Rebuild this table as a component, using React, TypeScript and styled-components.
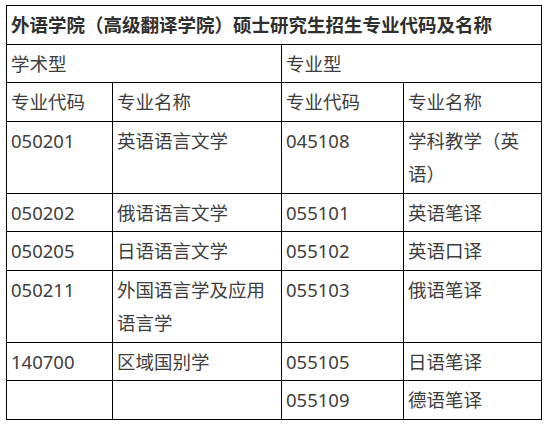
import React from "react";
import styled, { createGlobalStyle } from "styled-components";

const GlobalStyle = createGlobalStyle`
  html, body {
    margin: 0;
    padding: 0;
    background: #ffffff;
  }
  body {
    font-family: "Noto Sans", "Noto Sans CJK SC", sans-serif;
  }
`;

const Page = styled.div`
  padding: 5px 6px;
`;

const Table = styled.table`
  width: 535px;
  table-layout: fixed;
  border-collapse: collapse;
  font-size: 18.5px;
  line-height: 33.5px;
  color: #3e3e3e;
`;

const Cell = styled.td<{ $bold?: boolean }>`
  border: 1px solid #000000;
  padding: 2px 4px;
  vertical-align: top;
  text-align: left;
  font-weight: ${({ $bold }) => ($bold ? 700 : 400)};
  color: ${({ $bold }) => ($bold ? "#2f2f2f" : "#3e3e3e")};
  word-break: break-all;
`;

type Row = [string, string, string, string];

const rows: Row[] = [
  ["050201", "英语语言文学", "045108", "学科教学（英语）"],
  ["050202", "俄语语言文学", "055101", "英语笔译"],
  ["050205", "日语语言文学", "055102", "英语口译"],
  ["050211", "外国语言学及应用语言学", "055103", "俄语笔译"],
  ["140700", "区域国别学", "055105", "日语笔译"],
  ["", "", "055109", "德语笔译"],
];

export default function App() {
  return (
    <>
      <GlobalStyle />
      <Page>
        <Table>
          <colgroup>
            <col style={{ width: 106 }} />
            <col style={{ width: 169 }} />
            <col style={{ width: 122 }} />
            <col style={{ width: 138 }} />
          </colgroup>
          <tbody>
            <tr>
              <Cell colSpan={4} $bold>
                外语学院（高级翻译学院）硕士研究生招生专业代码及名称
              </Cell>
            </tr>
            <tr>
              <Cell colSpan={2}>学术型</Cell>
              <Cell colSpan={2}>专业型</Cell>
            </tr>
            <tr>
              <Cell>专业代码</Cell>
              <Cell>专业名称</Cell>
              <Cell>专业代码</Cell>
              <Cell>专业名称</Cell>
            </tr>
            {rows.map((r, i) => (
              <tr key={i}>
                {r.map((text, j) => (
                  <Cell key={j}>{text}</Cell>
                ))}
              </tr>
            ))}
          </tbody>
        </Table>
      </Page>
    </>
  );
}
